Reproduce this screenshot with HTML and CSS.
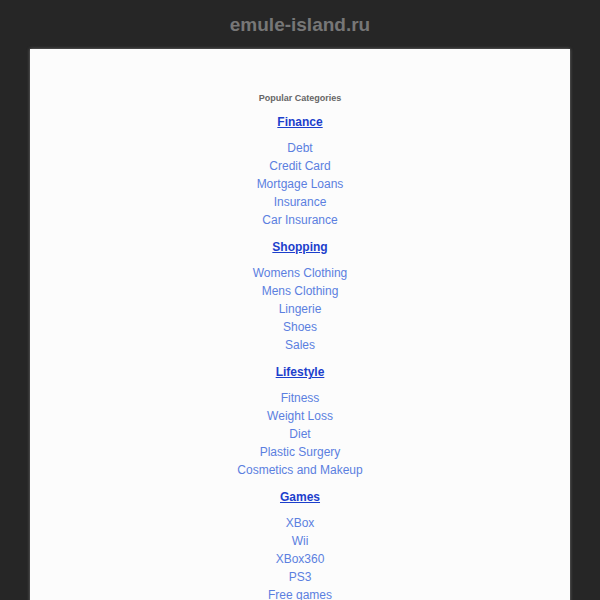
FILE: index.html
```html
<!doctype html>
<html>

<head>
    <title>emule-island.ru</title>
    <link rel="stylesheet" href="styles.css">
</head>

<body>
    <div class="header">emule-island.ru</div>

    <div class="panel">
        <p class="caption">Popular Categories</p>

        <h2><a href="#">Finance</a></h2>
        <ul>
            <li><a href="#">Debt</a></li>
            <li><a href="#">Credit Card</a></li>
            <li><a href="#">Mortgage Loans</a></li>
            <li><a href="#">Insurance</a></li>
            <li><a href="#">Car Insurance</a></li>
        </ul>

        <h2><a href="#">Shopping</a></h2>
        <ul>
            <li><a href="#">Womens Clothing</a></li>
            <li><a href="#">Mens Clothing</a></li>
            <li><a href="#">Lingerie</a></li>
            <li><a href="#">Shoes</a></li>
            <li><a href="#">Sales</a></li>
        </ul>

        <h2><a href="#">Lifestyle</a></h2>
        <ul>
            <li><a href="#">Fitness</a></li>
            <li><a href="#">Weight Loss</a></li>
            <li><a href="#">Diet</a></li>
            <li><a href="#">Plastic Surgery</a></li>
            <li><a href="#">Cosmetics and Makeup</a></li>
        </ul>

        <h2><a href="#">Games</a></h2>
        <ul>
            <li><a href="#">XBox</a></li>
            <li><a href="#">Wii</a></li>
            <li><a href="#">XBox360</a></li>
            <li><a href="#">PS3</a></li>
            <li><a href="#">Free games</a></li>
        </ul>
    </div>
</body>

</html>
```

FILE: styles.css
```css
body {
    margin: 0;
    background-color: #262626;
    font-family: "Liberation Sans", Arial, sans-serif;
}

/* 顶部标题 */
.header {
    height: 49px;
    line-height: 49px;
    text-align: center;
    font-size: 19px;
    font-weight: bold;
    color: #777;
}

/* 内容面板 */
.panel {
    margin: 0 30px;
    padding: 43px 0 40px;
    min-height: 600px;
    background-color: #fcfcfc;
    box-shadow: 0 0 3px #777;
    text-align: center;
}

.caption {
    margin: 0;
    line-height: 12px;
    font-size: 9px;
    font-weight: bold;
    color: #666;
}

h2 {
    margin: 9px 0 8px;
    line-height: 18px;
    font-size: 12px;
    font-weight: bold;
}

h2 a {
    color: #1c3fcc;
    text-decoration: underline;
}

ul {
    margin: 0;
    padding: 0;
    list-style: none;
}

li {
    line-height: 18px;
    font-size: 12px;
}

li a {
    color: #5b7fe0;
    text-decoration: none;
}
```
